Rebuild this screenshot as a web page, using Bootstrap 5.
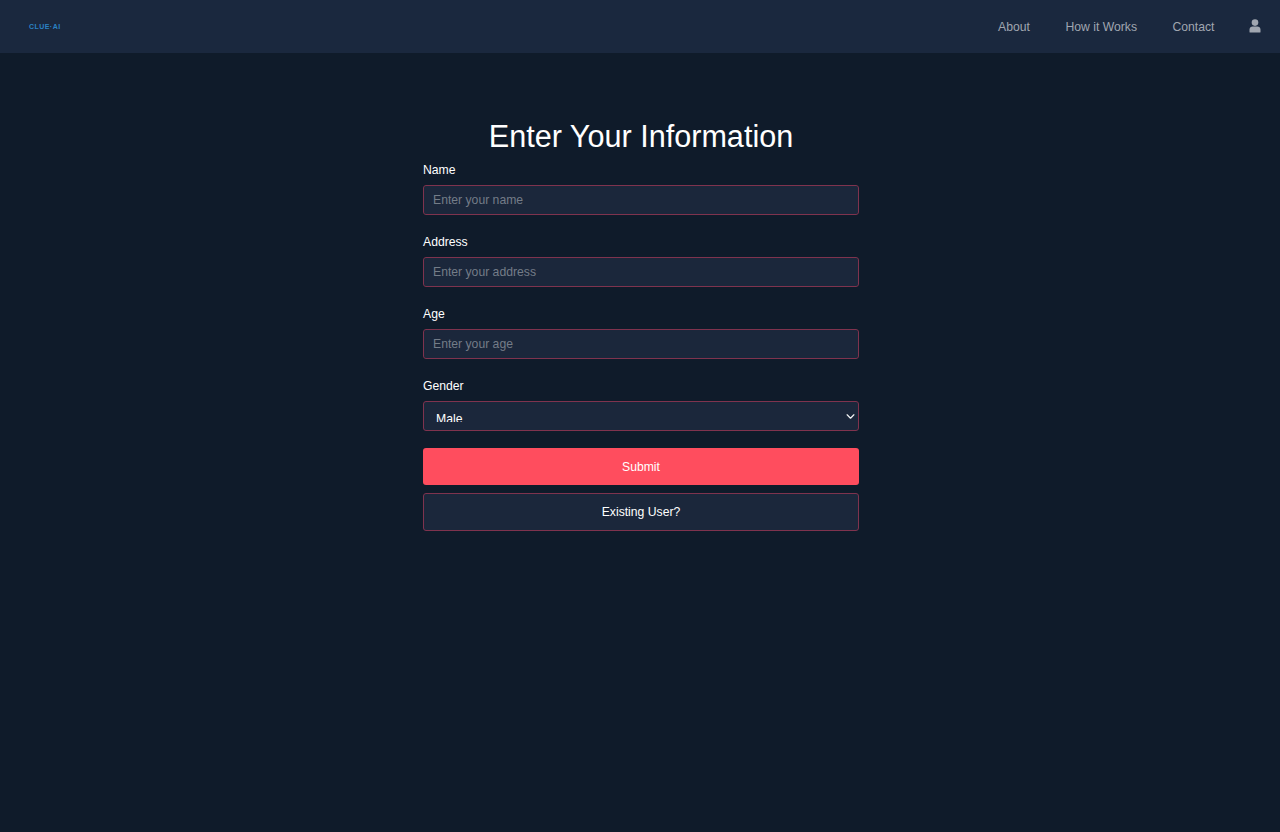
<!DOCTYPE html>
<html lang="en">
<head>
    <meta charset="UTF-8">
    <meta name="viewport" content="width=device-width, initial-scale=1.0">
    <title>Enter Your Information</title>
    <link href="https://cdn.jsdelivr.net/npm/bootstrap@5.3.3/dist/css/bootstrap.min.css" rel="stylesheet">
    <style>
        body {
            background-color: #0f1b2a;
            font-family: "Liberation Sans", Arial, sans-serif;
            color: #fff;
            min-height: 832px;
        }
        .top-bar {
            height: 53px;
            background-color: #1a283e;
            padding: 0 19px 0 29px;
        }
        .logo-text {
            font-size: 7px;
            font-weight: 700;
            color: #2a82c4;
            letter-spacing: 0.45px;
            line-height: 1;
        }
        .top-links {
            gap: 35.5px;
        }
        .top-links a {
            color: #a0a6b0;
            font-size: 12.2px;
            text-decoration: none;
            padding-top: 2px;
        }
        .top-links svg {
            margin-left: -1px;
        }
        .page-title {
            font-size: 30.6px;
            font-weight: 400;
            line-height: 37px;
            margin: 65px 0 8px;
            padding-left: 2px;
        }
        .info-form {
            width: 436px;
            margin-left: 423px;
        }
        .field-label {
            font-size: 12.2px;
            line-height: 15px;
            margin-bottom: 7px;
            display: block;
        }
        .field-wrap {
            margin-bottom: 20px;
        }
        .dark-input.form-control,
        .dark-input.form-select {
            height: 30px;
            min-height: 30px;
            background-color: #1b273b;
            border: 1px solid #7f334e;
            border-radius: 3px;
            color: #fff;
            font-size: 12.2px;
            box-shadow: none;
        }
        .dark-input.form-control {
            padding: 0 9px;
        }
        .dark-input.form-control::placeholder {
            color: #747c88;
            opacity: 1;
        }
        .dark-input.form-select {
            padding: 10px 20px 8px 12px;
            line-height: 14px;
            background-image: url("data:image/svg+xml,%3csvg xmlns='http://www.w3.org/2000/svg' viewBox='0 0 16 16'%3e%3cpath fill='none' stroke='%23f1f3f5' stroke-linecap='round' stroke-linejoin='round' stroke-width='2.2' d='m2 5 6 6 6-6'/%3e%3c/svg%3e");
            background-position: right 3px center;
            background-size: 9px 9px;
        }
        .submit-btn.btn,
        .existing-btn.btn {
            display: block;
            width: 100%;
            font-size: 12.2px;
            color: #fff;
            border-radius: 3px;
        }
        .submit-btn.btn {
            height: 37px;
            margin-top: 17px;
            padding: 1px 0 0;
            background-color: #ff4d5e;
            border: 0;
        }
        .existing-btn.btn {
            height: 38px;
            margin-top: 8px;
            padding: 0;
            background-color: #1b273b;
            border: 1px solid #7f334e;
        }
    </style>
</head>
<body>

    <!-- Barra superior -->
    <nav class="top-bar d-flex align-items-center justify-content-between">
        <span class="logo-text">CLUE&#183;AI</span>
        <div class="top-links d-flex align-items-center">
            <a href="#">About</a>
            <a href="#">How it Works</a>
            <a href="#">Contact</a>
            <svg width="12" height="14" viewBox="0 0 12 14" aria-label="User">
                <circle cx="6" cy="3.6" r="3.3" fill="#a0a6b0"/>
                <path d="M0.5 13v-2.2C0.5 8.8 2 7.6 3.6 7.6h4.8c1.6 0 3.1 1.2 3.1 3.2V13c0 .4-.3.6-.6.6H1.1c-.3 0-.6-.2-.6-.6z" fill="#a0a6b0"/>
            </svg>
        </div>
    </nav>

    <h1 class="page-title text-center">Enter Your Information</h1>

    <form class="info-form">
        <div class="field-wrap">
            <label class="field-label" for="name">Name</label>
            <input type="text" class="form-control dark-input" id="name" placeholder="Enter your name">
        </div>
        <div class="field-wrap">
            <label class="field-label" for="address">Address</label>
            <input type="text" class="form-control dark-input" id="address" placeholder="Enter your address">
        </div>
        <div class="field-wrap">
            <label class="field-label" for="age">Age</label>
            <input type="text" class="form-control dark-input" id="age" placeholder="Enter your age">
        </div>
        <div>
            <label class="field-label" for="gender">Gender</label>
            <select class="form-select dark-input" id="gender">
                <option>Male</option>
                <option>Female</option>
            </select>
        </div>
        <button type="button" class="btn submit-btn">Submit</button>
        <button type="button" class="btn existing-btn">Existing User?</button>
    </form>

    <script src="https://cdn.jsdelivr.net/npm/bootstrap@5.3.3/dist/js/bootstrap.bundle.min.js"></script>
</body>
</html>
